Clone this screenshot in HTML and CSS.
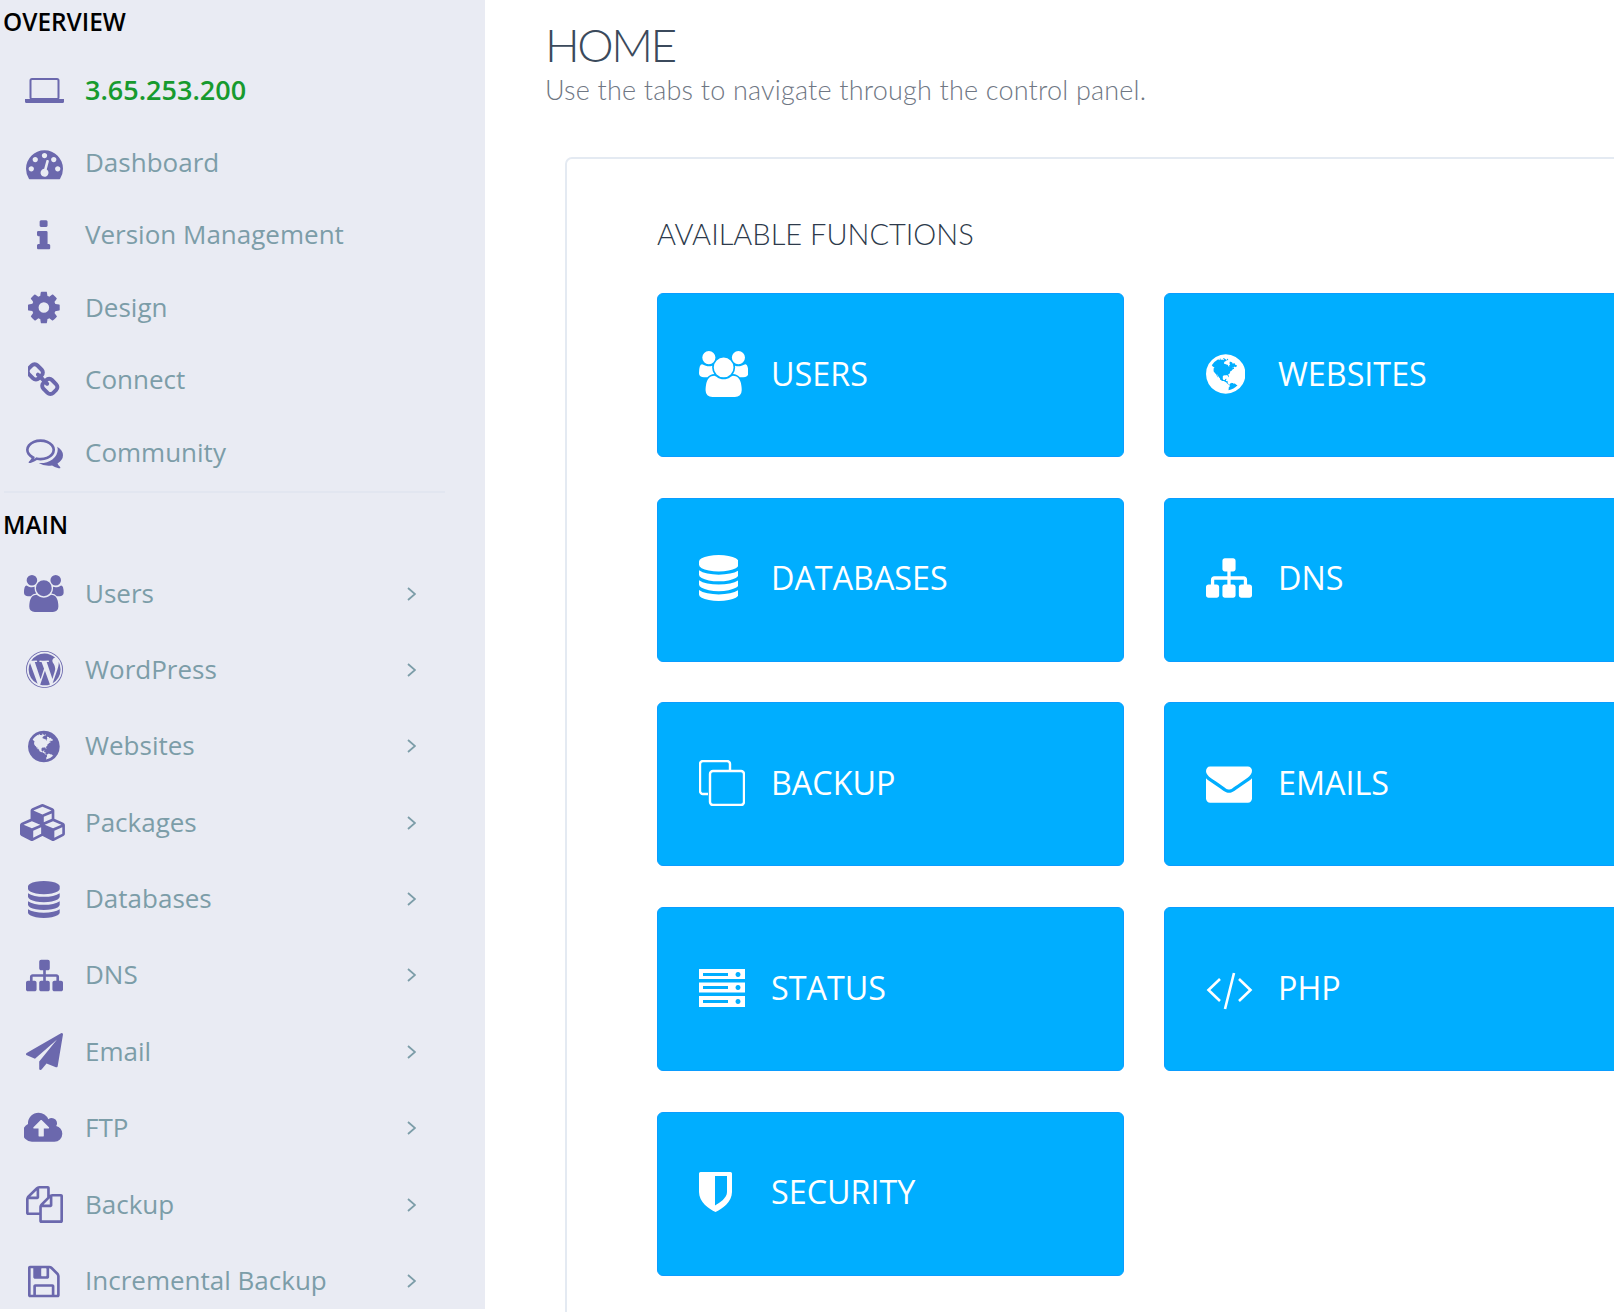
FILE: index.html
```html
<!DOCTYPE html>
<html lang="en">
<head>
  <meta charset="utf-8">
  <title>Home</title>
  <link rel="stylesheet" href="styles.css">
</head>
<body>
<svg class="sprite" xmlns="http://www.w3.org/2000/svg">
  <defs>
    <path id="i-users" d="M657 896q-162 5-265 128h-134q-82 0-138-40.5t-56-118.5q0-353 124-353 6 0 43.5 21t97.5 42.5 119 21.5q67 0 133-23-5 37-5 66 0 139 81 256zm1071 637q0 120-73 189.5t-194 69.5h-874q-121 0-194-69.5t-73-189.5q0-53 3.5-103.5t14-109 26.5-108.5 43-97.5 62-81 85.5-53.5 111.5-20q10 0 43 21.5t73 48 107 48 135 21.5 135-21.5 107-48 73-48 43-21.5q61 0 111.5 20t85.5 53.5 62 81 43 97.5 26.5 108.5 14 109 3.5 103.5zm-1024-1277q0 106-75 181t-181 75-181-75-75-181 75-181 181-75 181 75 75 181zm704 384q0 159-112.5 271.5t-271.5 112.5-271.5-112.5-112.5-271.5 112.5-271.5 271.5-112.5 271.5 112.5 112.5 271.5zm576 225q0 78-56 118.5t-138 40.5h-134q-103-123-265-128 81-117 81-256 0-29-5-66 66 23 133 23 59 0 119-21.5t97.5-42.5 43.5-21q124 0 124 353zm-128-609q0 106-75 181t-181 75-181-75-75-181 75-181 181-75 181 75 75 181z"/>
    <path id="i-database" d="M768 768q237 0 443-43t325-127v170q0 69-103 128t-280 93.5-385 34.5-385-34.5-280-93.5-103-128v-170q119 84 325 127t443 43zm0 768q237 0 443-43t325-127v170q0 69-103 128t-280 93.5-385 34.5-385-34.5-280-93.5-103-128v-170q119 84 325 127t443 43zm0-384q237 0 443-43t325-127v170q0 69-103 128t-280 93.5-385 34.5-385-34.5-280-93.5-103-128v-170q119 84 325 127t443 43zm0-1152q208 0 385 34.5t280 93.5 103 128v128q0 69-103 128t-280 93.5-385 34.5-385-34.5-280-93.5-103-128v-128q0-69 103-128t280-93.5 385-34.5z"/>
    <path id="i-send" d="M1764 11q33 24 27 64l-256 1536q-5 29-32 45-14 8-31 8-11 0-24-5l-453-185-242 295q-18 23-49 23-13 0-22-4-19-7-30.5-23.5t-11.5-36.5v-349l864-1059-1069 925-395-162q-37-14-40-55-2-40 32-59l1664-960q15-9 32-9 20 0 36 11z"/>
    <path id="i-cog" d="M1152 896q0-106-75-181t-181-75-181 75-75 181 75 181 181 75 181-75 75-181zm512-109v222q0 12-8 23t-20 13l-185 28q-19 54-39 91 35 50 107 138 10 12 10 25t-9 23q-27 37-99 108t-94 71q-12 0-26-9l-138-108q-44 23-91 38-16 136-29 186-7 28-36 28h-222q-14 0-24.5-8.5t-11.5-21.5l-28-184q-49-16-90-37l-141 107q-10 9-25 9-14 0-25-11-126-114-165-168-7-10-7-23 0-12 8-23 15-21 51-66.5t54-70.5q-27-50-41-99l-183-27q-13-2-21-12.5t-8-23.5v-222q0-12 8-23t19-13l186-28q14-46 39-92-40-57-107-138-10-12-10-24 0-10 9-23 26-36 98.5-107.5t94.5-71.5q13 0 26 10l138 107q44-23 91-38 16-136 29-186 7-28 36-28h222q14 0 24.5 8.5t11.5 21.5l28 184q49 16 90 37l142-107q9-9 24-9 13 0 25 10 129 119 165 170 7 8 7 22 0 12-8 23-15 21-51 66.5t-54 70.5q26 50 41 98l183 28q13 2 21 12.5t8 23.5z"/>
    <path id="i-link" d="M1456 1216q0-40-28-68l-208-208q-28-28-68-28-42 0-72 32 3 3 19 18.5t21.5 21.5 15 19 13 25.5 3.5 27.5q0 40-28 68t-68 28q-15 0-27.5-3.5t-25.5-13-19-15-21.5-21.5-18.5-19q-33 31-33 73 0 40 28 68l206 207q27 27 68 27 40 0 68-26l147-146q28-28 28-67zm-703-705q0-40-28-68l-206-207q-28-28-68-28-39 0-68 27l-147 146q-28 28-28 67 0 40 28 68l208 208q27 27 68 27 42 0 72-31-3-3-19-18.5t-21.5-21.5-15-19-13-25.5-3.5-27.5q0-40 28-68t68-28q15 0 27.5 3.5t25.5 13 19 15 21.5 21.5 18.5 19q33-31 33-73zm895 705q0 120-85 203l-147 146q-83 83-203 83-121 0-204-85l-206-207q-83-83-83-203 0-123 88-209l-88-88q-86 88-208 88-120 0-204-84l-208-208q-84-84-84-204t85-203l147-146q83-83 203-83 121 0 204 85l206 207q83 83 83 203 0 123-88 209l88 88q86-88 208-88 120 0 204 84l208 208q84 84 84 204z"/>
    <path id="i-comments" d="M704 384q-153 0-286 52t-211.5 141-78.5 191q0 82 53 158t149 132l97 56-35 84q34-20 62-39l44-31 53 10q78 14 153 14 153 0 286-52t211.5-141 78.5-191-78.5-191-211.5-141-286-52zm0-128q191 0 353.5 68.5t256.5 186.5 94 257-94 257-256.5 186.5-353.5 68.5q-86 0-176-16-124 88-278 128-36 9-86 16h-3q-11 0-20.5-8t-11.5-21q-1-3-1-6.5t.5-6.5 2-6l2.5-5 3.5-5.5 4-5 4.5-5 4-4.5q5-6 23-25t26-29.5 22.5-29 25-38.5 20.5-44q-124-72-195-177t-71-224q0-139 94-257t256.5-186.5 353.5-68.5zm822 1169q10 24 20.5 44t25 38.5 22.5 29 26 29.5 23 25q1 1 4 4.5t4.5 5 4 5 3.5 5.5l2.5 5 2 6 .5 6.5-1 6.5q-3 14-13 22t-22 7q-50-7-86-16-154-40-278-128-90 16-176 16-271 0-472-132 58 4 88 4 161 0 309-45t264-129q125-92 192-212t67-254q0-77-23-152 129 71 204 178t75 230q0 120-71 224.5t-195 176.5z"/>
    <path id="i-info" d="M640 1264v128q0 26-19 45t-45 19h-512q-26 0-45-19t-19-45v-128q0-26 19-45t45-19h64v-384h-64q-26 0-45-19t-19-45v-128q0-26 19-45t45-19h384q26 0 45 19t19 45v576h64q26 0 45 19t19 45zm-128-1152v192q0 26-19 45t-45 19h-256q-26 0-45-19t-19-45v-192q0-26 19-45t45-19h256q26 0 45 19t19 45z"/>
    <path id="i-dashboard" d="M384 1152q0-53-37.5-90.5t-90.5-37.5-90.5 37.5-37.5 90.5 37.5 90.5 90.5 37.5 90.5-37.5 37.5-90.5zm192-448q0-53-37.5-90.5t-90.5-37.5-90.5 37.5-37.5 90.5 37.5 90.5 90.5 37.5 90.5-37.5 37.5-90.5zm428 481l101-382q6-26-7.5-48.5t-38.5-29.5-48 6.5-30 39.5l-101 382q-60 5-107 43.5t-63 98.5q-20 77 20 146t117 89 146-20 89-117q16-60-6-117t-72-91zm660-33q0-53-37.5-90.5t-90.5-37.5-90.5 37.5-37.5 90.5 37.5 90.5 90.5 37.5 90.5-37.5 37.5-90.5zm-640-640q0-53-37.5-90.5t-90.5-37.5-90.5 37.5-37.5 90.5 37.5 90.5 90.5 37.5 90.5-37.5 37.5-90.5zm448 192q0-53-37.5-90.5t-90.5-37.5-90.5 37.5-37.5 90.5 37.5 90.5 90.5 37.5 90.5-37.5 37.5-90.5zm320 448q0 261-141 483-19 29-54 29h-1402q-35 0-54-29-141-221-141-483 0-182 71-348t191-286 286-191 348-71 348 71 286 191 191 286 71 348z"/>
    <path id="i-cubes" d="M640 1632l384-192v-314l-384 164v342zm-64-454l404-173-404-173-404 173zm1088 454l384-192v-314l-384 164v342zm-64-454l404-173-404-173-404 173zm-448-293l384-165v-266l-384 164v267zm-64-379l441-189-441-189-441 189zm1088 518v416q0 36-19 67t-52 47l-448 224q-25 14-57 14t-57-14l-448-224q-4-2-7-4-2 2-7 4l-448 224q-25 14-57 14t-57-14l-448-224q-33-16-52-47t-19-67v-416q0-38 21.5-70t56.5-48l434-186v-400q0-38 21.5-70t56.5-48l448-192q23-10 50-10t50 10l448 192q35 16 56.5 48t21.5 70v400l434 186q36 16 57 48t21 70z"/>
    <path id="i-cloud" d="M1216 864q0-14-9-23l-352-352q-9-9-23-9t-23 9l-351 351q-10 12-10 24 0 14 9 23t23 9h224v352q0 13 9.5 22.5t22.5 9.5h192q13 0 22.5-9.5t9.5-22.5v-352h224q13 0 22.5-9.5t9.5-22.5zm640 288q0 159-112.5 271.5t-271.5 112.5h-1088q-185 0-316.5-131.5t-131.5-316.5q0-130 70-240t188-165q-2-30-2-43 0-212 150-362t362-150q156 0 285.5 87t188.5 231q71-62 166-62 106 0 181 75t75 181q0 76-41 138 130 31 213.5 135.5t83.5 238.5z"/>
    <path id="i-files" d="M1696 384q40 0 68 28t28 68v1216q0 40-28 68t-68 28h-960q-40 0-68-28t-28-68v-288h-544q-40 0-68-28t-28-68v-672q0-40 20-88t48-76l408-408q28-28 76-48t88-20h416q40 0 68 28t28 68v328q68-40 128-40h416zm-544 213l-299 299h299v-299zm-640-384l-299 299h299v-299zm196 647l316-317v-416h-384v416q0 40-28 68t-68 28h-416v640h512v-256q0-40 20-88t48-76zm956 804v-1152h-384v416q0 40-28 68t-68 28h-416v640h896z"/>
    <path id="i-floppy" d="M512 1536h768v-384h-768v384zm896 0h128v-896q0-14-10-38.5t-20-34.5l-281-281q-10-10-34-20t-39-10v416q0 40-28 68t-68 28h-576q-40 0-68-28t-28-68v-416h-128v1280h128v-416q0-40 28-68t68-28h832q40 0 68 28t28 68v416zm-384-928v-320q0-13-9.5-22.5t-22.5-9.5h-192q-13 0-22.5 9.5t-9.5 22.5v320q0 13 9.5 22.5t22.5 9.5h192q13 0 22.5-9.5t9.5-22.5zm640 32v928q0 40-28 68t-68 28h-1344q-40 0-68-28t-28-68v-1344q0-40 28-68t68-28h928q40 0 88 20t76 48l280 280q28 28 48 76t20 88z"/>
    <path id="i-wordpress" d="M127 896q0-163 67-313l367 1005q-196-95-315-281t-119-411zm1288-39q0 19-2.5 38.5t-10 49.5-11.5 44-17.5 59-17.5 58l-76 256-278-826q46-3 88-8 19-2 26-18.5t-2.5-31-28.5-13.5l-205 10q-75-1-202-10-12-1-20.5 5t-11.5 15-1.5 18.5 9 16.5 19.5 8l80 8 120 328-168 504-280-832q46-3 88-8 19-2 26-18.5t-2.5-31-28.5-13.5l-205 10q-7 0-23-.5t-26-.5q105-160 274.5-253.5t367.5-93.5q147 0 280.5 53t238.5 149h-10q-55 0-92 40.5t-37 95.5q0 12 2 24t4 21.5 8 23 9 21 12 22.5 12.5 21 14.5 24 14 23q63 107 63 212zm-498 105l237 647q1 6 5 11-126 44-255 44-112 0-217-32zm661-436q95 174 95 369 0 209-104 385.5t-279 278.5l235-678q59-169 59-276 0-42-6-79zm-682-526q182 0 348 71t286 191 191 286 71 348-71 348-191 286-286 191-348 71-348-71-286-191-191-286-71-348 71-348 191-286 286-191 348-71zm0 1751q173 0 331.5-68t273-182.5 182.5-273 68-331.5-68-331.5-182.5-273-273-182.5-331.5-68-331.5 68-273 182.5-182.5 273-68 331.5 68 331.5 182.5 273 273 182.5 331.5 68z"/>
    <path id="i-globe" d="M896 128q209 0 385.5 103t279.5 279.5 103 385.5-103 385.5-279.5 279.5-385.5 103-385.5-103-279.5-279.5-103-385.5 103-385.5 279.5-279.5 385.5-103zm274 521q-2 1-9.5 9.5t-13.5 9.5q2 0 4.5-5t5-11 3.5-7q6-7 22-15 14-6 52-12 34-8 51 11-2-2 9.5-13t14.5-12q3-2 15-4.5t15-7.5l2-22q-12 1-17.5-7t-6.5-21q0 2-6 8 0-7-4.5-8t-11.5 1-9 1q-10-3-15-7.5t-8-16.5-4-15q-2-5-9.5-11t-9.5-10q-1-2-2.5-5.5t-3-6.5-4-5.5-5.5-2.5-7 5-7.5 10-4.5 5q-3-2-6-1.5t-4.5 1-4.5 3-5 3.5q-3 2-8.5 3t-8.5 2q15-5-1-11-10-4-16-3 9-4 7.5-12t-8.5-14h5q-1-4-8.5-8.5t-17.5-8.5-13-6q-8-5-34-9.5t-33-.5q-5 6-4.5 10.5t4 14 3.5 12.5q1 6-5.5 13t-6.5 12q0 7 14 15.5t10 21.5q-3 8-16 16t-16 12q-5 8-1.5 18.5t10.5 16.5q2 2 1.5 4t-3.5 4.5-5.5 4-6.5 3.5l-3 2q-11 5-20.5-6t-13.5-26q-7-25-16-30-23-8-29 1-5-13-41-26-25-9-58-4 6-1 0-15-7-15-19-12 3-6 4-17.5t1-13.5q3-13 12-23 1-1 7-8.5t9.5-13.5.5-6q35 4 50-11 5-5 11.5-17t10.5-17q9-6 14-5.5t14.5 5.5 14.5 5q14 1 15.5-11t-7.5-20q12 1 3-17-4-7-8-9-12-4-27 5-8 4 2 8-1-1-9.5 10.5t-16.5 17.5-16-5q-1-1-5.5-13.5t-9.5-13.5q-8 0-16 15 3-8-11-15t-24-8q19-12-8-27-7-4-20.5-5t-19.5 4q-5 7-5.5 11.5t5 8 10.5 5.5 11.5 4 8.5 3q14 10 8 14-2 1-8.5 3.5t-11.5 4.5-6 4q-3 4 0 14t-2 14q-5-5-9-17.5t-7-16.5q7 9-25 6l-10-1q-4 0-16 2t-20.5 1-13.5-8q-4-8 0-20 1-4 4-2-4-3-11-9.5t-10-8.5q-46 15-94 41 6 1 12-1 5-2 13-6.5t10-5.5q34-14 42-7l5-5q14 16 20 25-7-4-30-1-20 6-22 12 7 12 5 18-4-3-11.5-10t-14.5-11-15-5q-16 0-22 1-146 80-235 222 7 7 12 8 4 1 5 9t2.5 11 11.5-3q9 8 3 19 1-1 44 27 19 17 21 21 3 11-10 18-1-2-9-9t-9-4q-3 5 .5 18.5t10.5 12.5q-7 0-9.5 16t-2.5 35.5-1 23.5l2 1q-3 12 5.5 34.5t21.5 19.5q-13 3 20 43 6 8 8 9 3 2 12 7.5t15 10 10 10.5q4 5 10 22.5t14 23.5q-2 6 9.5 20t10.5 23q-1 0-2.5 1t-2.5 1q3 7 15.5 14t15.5 13q1 3 2 10t3 11 8 2q2-20-24-62-15-25-17-29-3-5-5.5-15.5t-4.5-14.5q2 0 6 1.5t8.5 3.5 7.5 4 2 3q-3 7 2 17.5t12 18.5 17 19 12 13q6 6 14 19.5t0 13.5q9 0 20 10.5t17 19.5q5 8 8 26t5 24q2 7 8.5 13.5t12.5 9.5l16 8 13 7q5 2 18.5 10.5t21.5 11.5q10 4 16 4t14.5-2.5 13.5-3.5q15-2 29 15t21 21q36 19 55 11-2 1 .5 7.5t8 15.5 9 14.5 5.5 8.5q5 6 18 15t18 15q6-4 7-9-3 8 7 20t18 10q14-3 14-32-31 15-49-18 0-1-2.5-5.5t-4-8.5-2.5-8.5 0-7.5 5-3q9 0 10-3.5t-2-12.5-4-13q-1-8-11-20t-12-15q-5 9-16 8t-16-9q0 1-1.5 5.5t-1.5 6.5q-13 0-15-1 1-3 2.5-17.5t3.5-22.5q1-4 5.5-12t7.5-14.5 4-12.5-4.5-9.5-17.5-2.5q-19 1-26 20-1 3-3 10.5t-5 11.5-9 7q-7 3-24 2t-24-5q-13-8-22.5-29t-9.5-37q0-10 2.5-26.5t3-25-5.5-24.5q3-2 9-9.5t10-10.5q2-1 4.5-1.5t4.5 0 4-1.5 3-6q-1-1-4-3-3-3-4-3 7 3 28.5-1.5t27.5 1.5q15 11 22-2 0-1-2.5-9.5t-.5-13.5q5 27 29 9 3 3 15.5 5t17.5 5q3 2 7 5.5t5.5 4.5 5-.5 8.5-6.5q10 14 12 24 11 40 19 44 7 3 11 2t4.5-9.5 0-14-1.5-12.5l-1-8v-18l-1-8q-15-3-18.5-12t1.5-18.5 15-18.5q1-1 8-3.5t15.5-6.5 12.5-8q21-19 15-35 7 0 11-9-1 0-5-3t-7.5-5-4.5-2q9-5 2-16 5-3 7.5-11t7.5-10q9 12 21 2 8-8 1-16 5-7 20.5-10.5t18.5-9.5q7 2 8-2t1-12 3-12q4-5 15-9t13-5l17-11q3-4 0-4 18 2 31-11 10-11-6-20 3-6-3-9.5t-15-5.5q3-1 11.5-.5t10.5-1.5q15-10-7-16-17-5-43 12zm-163 877q206-36 351-189-3-3-12.5-4.5t-12.5-3.5q-18-7-24-8 1-7-2.5-13t-8-9-12.5-8-11-7q-2-2-7-6t-7-5.5-7.5-4.5-8.5-2-10 1l-3 1q-3 1-5.5 2.5t-5.5 3-4 3 0 2.5q-21-17-36-22-5-1-11-5.5t-10.5-7-10-1.5-11.5 7q-5 5-6 15t-2 13q-7-5 0-17.5t2-18.5q-3-6-10.5-4.5t-12 4.5-11.5 8.5-9 6.5-8.5 5.5-8.5 7.5q-3 4-6 12t-5 11q-2-4-11.5-6.5t-9.5-5.5q2 10 4 35t5 38q7 31-12 48-27 25-29 40-4 22 12 26 0 7-8 20.5t-7 21.5q0 6 2 16z"/>
    <path id="i-sitemap" d="M1792 1248v320q0 40-28 68t-68 28h-320q-40 0-68-28t-28-68v-320q0-40 28-68t68-28h96v-192h-512v192h96q40 0 68 28t28 68v320q0 40-28 68t-68 28h-320q-40 0-68-28t-28-68v-320q0-40 28-68t68-28h96v-192h-512v192h96q40 0 68 28t28 68v320q0 40-28 68t-68 28h-320q-40 0-68-28t-28-68v-320q0-40 28-68t68-28h96v-192q0-52 38-90t90-38h512v-192h-96q-40 0-68-28t-28-68v-320q0-40 28-68t68-28h320q40 0 68 28t28 68v320q0 40-28 68t-68 28h-96v192h512q52 0 90 38t38 90v192h96q40 0 68 28t28 68z"/>
    <path id="i-envelope" d="M1792 710v794q0 66-47 113t-113 47h-1472q-66 0-113-47t-47-113v-794q44 49 101 87 362 246 497 345 57 42 92.5 65.5t94.5 48 110 24.5h2q51 0 110-24.5t94.5-48 92.5-65.5q170-123 498-345 57-39 100-87zm0-294q0 79-49 151t-122 123q-376 261-468 325-10 7-42.5 30.5t-54 38-52 32.5-57.5 27-50 9h-2q-23 0-50-9t-57.5-27-52-32.5-54-38-42.5-30.5q-91-64-262-182.5t-205-142.5q-62-42-117-115.5t-55-136.5q0-78 41.5-130t118.5-52h1472q65 0 112.5 47t47.5 113z"/>
  </defs>
</svg>

<div class="page">
  <aside class="sidebar">
    <h3 class="side-title">OVERVIEW</h3>
    <ul class="nav nav-top">
      <li class="nav-item ip">
        <span class="nav-icon"><svg class="icon" viewBox="0 0 39 37"><rect x="5.5" y="7" width="28" height="20" rx="1.5" fill="none" stroke="currentColor" stroke-width="2"/><path d="M0 27h39v2.5q0 1.5-1.5 1.5h-36q-1.5 0-1.5-1.5z"/></svg></span>
        <span>3.65.253.200</span>
      </li>
      <li class="nav-item"><span class="nav-icon"><svg class="icon" viewBox="0 0 1792 1792"><use href="#i-dashboard"/></svg></span><span>Dashboard</span></li>
      <li class="nav-item"><span class="nav-icon"><svg class="icon" viewBox="0 -112 640 1792"><use href="#i-info"/></svg></span><span>Version Management</span></li>
      <li class="nav-item"><span class="nav-icon"><svg class="icon" viewBox="128 0 1536 1792"><use href="#i-cog"/></svg></span><span>Design</span></li>
      <li class="nav-item"><span class="nav-icon"><svg class="icon" viewBox="128 0 1536 1792"><use href="#i-link"/></svg></span><span>Connect</span></li>
      <li class="nav-item"><span class="nav-icon"><svg class="icon" viewBox="0 0 1792 1792"><use href="#i-comments"/></svg></span><span>Community</span></li>
    </ul>
    <hr class="side-line">
    <h3 class="side-title">MAIN</h3>
    <ul class="nav nav-main">
      <li class="nav-item"><span class="nav-icon"><svg class="icon" viewBox="64 0 1920 1792"><use href="#i-users"/></svg></span><span>Users</span><svg class="chev" viewBox="0 0 9 14"><path d="M1 1l7 6-7 6"/></svg></li>
      <li class="nav-item"><span class="nav-icon"><svg class="icon" viewBox="0 0 1792 1792"><use href="#i-wordpress"/></svg></span><span>WordPress</span><svg class="chev" viewBox="0 0 9 14"><path d="M1 1l7 6-7 6"/></svg></li>
      <li class="nav-item"><span class="nav-icon"><svg class="icon" viewBox="128 0 1536 1792"><use href="#i-globe"/></svg></span><span>Websites</span><svg class="chev" viewBox="0 0 9 14"><path d="M1 1l7 6-7 6"/></svg></li>
      <li class="nav-item"><span class="nav-icon"><svg class="icon" viewBox="0 0 2304 1792"><use href="#i-cubes"/></svg></span><span>Packages</span><svg class="chev" viewBox="0 0 9 14"><path d="M1 1l7 6-7 6"/></svg></li>
      <li class="nav-item"><span class="nav-icon"><svg class="icon" viewBox="0 0 1536 1792"><use href="#i-database"/></svg></span><span>Databases</span><svg class="chev" viewBox="0 0 9 14"><path d="M1 1l7 6-7 6"/></svg></li>
      <li class="nav-item"><span class="nav-icon"><svg class="icon" viewBox="0 0 1792 1792"><use href="#i-sitemap"/></svg></span><span>DNS</span><svg class="chev" viewBox="0 0 9 14"><path d="M1 1l7 6-7 6"/></svg></li>
      <li class="nav-item"><span class="nav-icon"><svg class="icon" viewBox="0 0 1792 1792"><use href="#i-send"/></svg></span><span>Email</span><svg class="chev" viewBox="0 0 9 14"><path d="M1 1l7 6-7 6"/></svg></li>
      <li class="nav-item"><span class="nav-icon"><svg class="icon" viewBox="0 0 1920 1792"><use href="#i-cloud"/></svg></span><span>FTP</span><svg class="chev" viewBox="0 0 9 14"><path d="M1 1l7 6-7 6"/></svg></li>
      <li class="nav-item"><span class="nav-icon"><svg class="icon" viewBox="0 0 1792 1792"><use href="#i-files"/></svg></span><span>Backup</span><svg class="chev" viewBox="0 0 9 14"><path d="M1 1l7 6-7 6"/></svg></li>
      <li class="nav-item"><span class="nav-icon"><svg class="icon" viewBox="128 0 1536 1792"><use href="#i-floppy"/></svg></span><span>Incremental Backup</span><svg class="chev" viewBox="0 0 9 14"><path d="M1 1l7 6-7 6"/></svg></li>
    </ul>
  </aside>

  <main class="content">
    <h1 class="page-title">HOME</h1>
    <p class="page-sub">Use the tabs to navigate through the control panel.</p>

    <section class="card">
      <h2 class="card-title">AVAILABLE FUNCTIONS</h2>
      <div class="tiles">
        <a class="tile"><span class="tile-icon"><svg class="icon" viewBox="64 0 1920 1792"><use href="#i-users"/></svg></span>USERS</a>
        <a class="tile"><span class="tile-icon"><svg class="icon" viewBox="128 0 1536 1792"><use href="#i-globe"/></svg></span>WEBSITES</a>
        <a class="tile"><span class="tile-icon"><svg class="icon" viewBox="0 0 1536 1792"><use href="#i-database"/></svg></span>DATABASES</a>
        <a class="tile"><span class="tile-icon"><svg class="icon" viewBox="0 0 1792 1792"><use href="#i-sitemap"/></svg></span>DNS</a>
        <a class="tile"><span class="tile-icon"><svg class="icon" viewBox="0 0 46 46"><path d="M9 34H4a3 3 0 0 1-3-3V4a3 3 0 0 1 3-3h24a3 3 0 0 1 3 3v6" fill="none" stroke="currentColor" stroke-width="2.4"/><rect x="11" y="11" width="34" height="34" rx="3" fill="none" stroke="currentColor" stroke-width="2.4"/></svg></span>BACKUP</a>
        <a class="tile"><span class="tile-icon"><svg class="icon" viewBox="0 0 1792 1792"><use href="#i-envelope"/></svg></span>EMAILS</a>
        <a class="tile"><span class="tile-icon"><svg class="icon" viewBox="0 0 46 46"><path fill-rule="evenodd" d="M0 4h46v10H0zM4 8v3h25V8zM39 7a2.5 2.500 0 1 0 .01 0zM0 17.500h46v10H0zM4 21v3h25v-3zM39 20a2.500 2.500 0 1 0 .01 0zM0 31h46v11H0zM4 35v3h25v-3zM39 34a2.500 2.500 0 1 0 .01 0z"/></svg></span>STATUS</a>
        <a class="tile"><span class="tile-icon"><svg class="icon" viewBox="0 0 47 46"><path d="M14 14L2.500 25 14 36M33 14l11.500 11L33 36M28 8L19 44" fill="none" stroke="currentColor" stroke-width="2.600"/></svg></span>PHP</a>
        <a class="tile"><span class="tile-icon"><svg class="icon" viewBox="0 0 33 46"><path fill-rule="evenodd" d="M1.500 3h30q1.500 0 1.500 1.500V23c0 10-10 17-16.500 20C10 40 0 33 0 23V4.500Q0 3 1.500 3zM16 7v29.500C21 33.500 28 29 28 23V7z"/></svg></span>SECURITY</a>
      </div>
    </section>
  </main>
</div>
</body>
</html>
```

FILE: styles.css
```css
html, body { margin: 0; padding: 0; height: 100%; background: #fff; overflow: hidden; }
body { font-family: "Open Sans", sans-serif; }
ul { list-style: none; margin: 0; padding: 0; }
.sprite { display: none; }
.icon { display: block; height: 37px; fill: currentColor; }

.page { display: flex; align-items: flex-start; width: 1614px; height: 1312px; overflow: hidden; }

/* sidebar */
.sidebar { flex: 0 0 485px; height: 1309px; background: #e9ebf3; overflow: hidden; }
.side-title { margin: 0; padding-left: 3px; height: 44px; line-height: 44px; font-size: 24.4px; font-weight: 600; color: #000; }
.side-line { margin: 3.5px 40px 10px 4px; border: 0; border-top: 2px solid #e2e6f0; }
.nav-item { display: flex; align-items: center; padding-right: 69px; font-size: 26px; color: #7c9da8; }
.nav-top { margin-top: 9.5px; }
.nav-main { margin-top: 7px; }
.nav-top .nav-item { height: 72.4px; }
.nav-main .nav-item { height: 76.4px; }
.nav-icon { flex: 0 0 48px; margin: 2px 17px 0 20px; display: flex; justify-content: center; color: #6b68ad; }
.ip { color: #179a2e; font-weight: 600; font-size: 27px; }
.chev { margin: 2px 0 0 auto; width: 9px; height: 14px; fill: none; stroke: #7c9da8; stroke-width: 1.8; }

/* main area */
.content { flex: 1; padding-left: 60px; min-width: 0; }
.page-title { margin: 20px 0 0; font-family: Lato, sans-serif; font-weight: 300; font-size: 46px; line-height: 50px; letter-spacing: -2.5px; color: #3b4a5c; }
.page-sub { margin: 3px 0 0; font-family: Lato, sans-serif; font-weight: 300; font-size: 27px; line-height: 34px; letter-spacing: .19px; color: #6f7784; }

.card { box-sizing: border-box; width: 1200px; height: 1300px; margin: 50px 0 0 20px; padding: 57px 0 0 90px; border: 2px solid #e4eaf2; border-radius: 7px; }
.card-title { margin: 0 0 41px; font-family: Lato, sans-serif; font-weight: 300; font-size: 29px; line-height: 36px; color: #2d3a4b; }

.tiles { display: grid; grid-template-columns: 467px 467px; grid-auto-rows: 164px; column-gap: 40px; row-gap: 40.7px; }
.tile { box-sizing: border-box; display: flex; align-items: center; padding: 0 0 5px 41px; background: #00aeff; border: 1px solid #0a9dff; border-radius: 6px; color: #fff; font-size: 32.3px; }
.tile .icon { height: 46px; margin-top: 2px; }
.tile-icon { flex: 0 0 72px; display: flex; }
```
